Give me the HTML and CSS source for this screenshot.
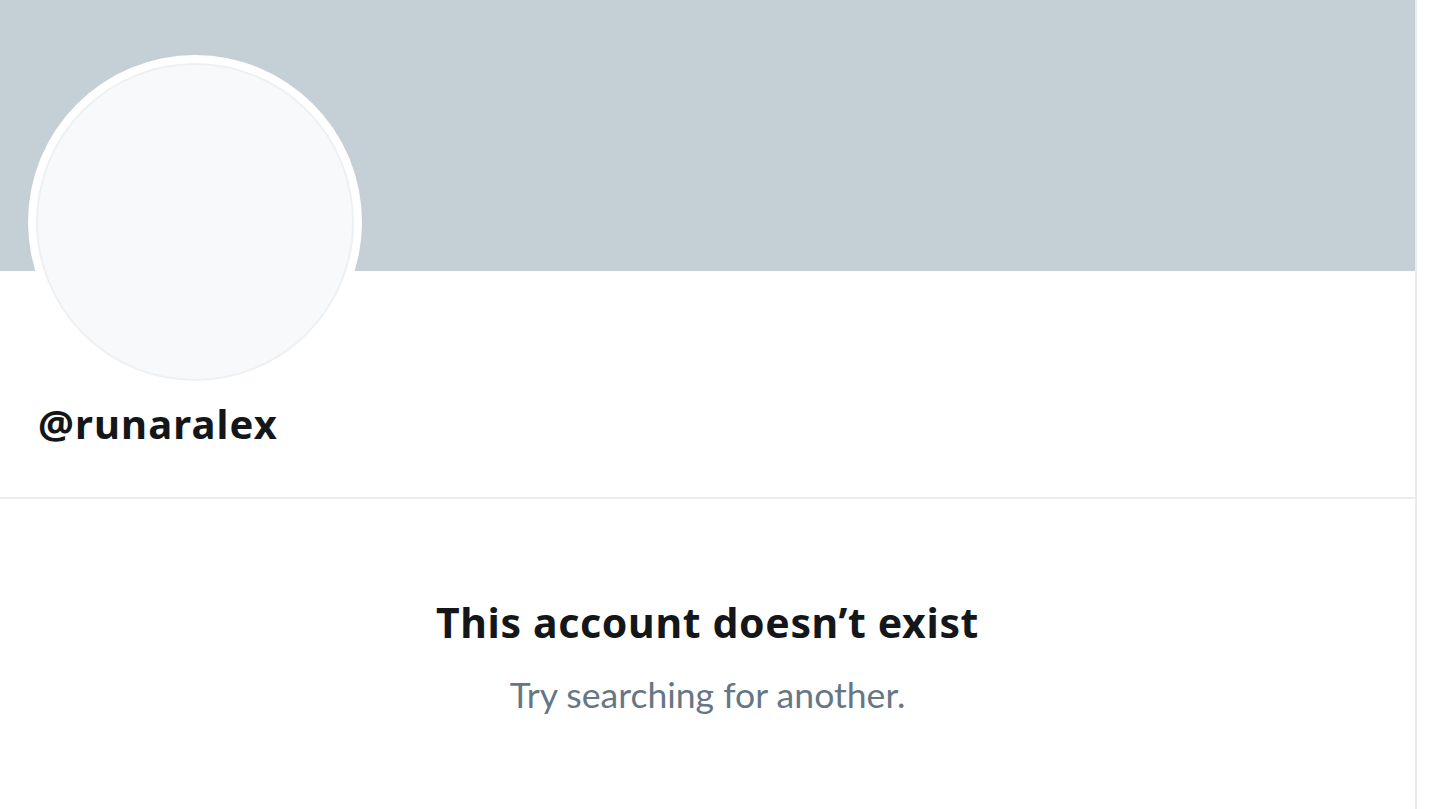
FILE: index.html
```html
<!DOCTYPE html>
<html lang="en">
<head>
<meta charset="utf-8">
<title>@runaralex</title>
<link rel="stylesheet" href="styles.css">
</head>
<body>
<main class="column">
  <header class="profile">
    <div class="banner"></div>
    <div class="info">
      <div class="avatar"><div class="avatar-inner"></div></div>
      <h2 class="handle">@runaralex</h2>
    </div>
  </header>
  <section class="empty">
    <h1 class="empty-title">This account doesn’t exist</h1>
    <p class="empty-text">Try searching for another.</p>
  </section>
</main>
</body>
</html>
```

FILE: styles.css
```css
html, body {
  margin: 0;
  padding: 0;
  background: #ffffff;
}
body {
  font-family: "Noto Sans", "Open Sans", "Liberation Sans", sans-serif;
  color: #14171a;
  width: 1440px;
  height: 809px;
  overflow: hidden;
}
.column {
  width: 1415px;
  height: 809px;
  border-right: 2px solid #e9edf0;
  display: flex;
  flex-direction: column;
}
.profile {
  border-bottom: 2px solid #e9edf0;
  height: 499px;
  box-sizing: border-box;
}
.banner {
  height: 271px;
  background: #c5cfd6;
}
.info {
  padding-left: 28px;
}
.avatar {
  width: 334px;
  height: 334px;
  margin-top: -216px;
  border-radius: 50%;
  background: #ffffff;
  display: flex;
  align-items: center;
  justify-content: center;
}
.avatar-inner {
  width: 314px;
  height: 314px;
  border-radius: 50%;
  background: #f7f9fa;
  border: 2px solid #eef1f3;
}
.handle {
  margin: 10px 0 0 10px;
  font-size: 40px;
  font-weight: 700;
  line-height: 50px;
  letter-spacing: 1.1px;
  color: #14171a;
}
.empty {
  display: flex;
  flex-direction: column;
  align-items: center;
  padding-top: 95px;
}
.empty-title {
  margin: 0;
  font-size: 41px;
  font-weight: 700;
  line-height: 56px;
  letter-spacing: 0.65px;
  color: #14171a;
}
.empty-text {
  margin: 23px 0 0;
  font-family: "Lato", "Noto Sans", sans-serif;
  font-size: 35.6px;
  font-weight: 400;
  line-height: 44px;
  color: #657786;
}
```
